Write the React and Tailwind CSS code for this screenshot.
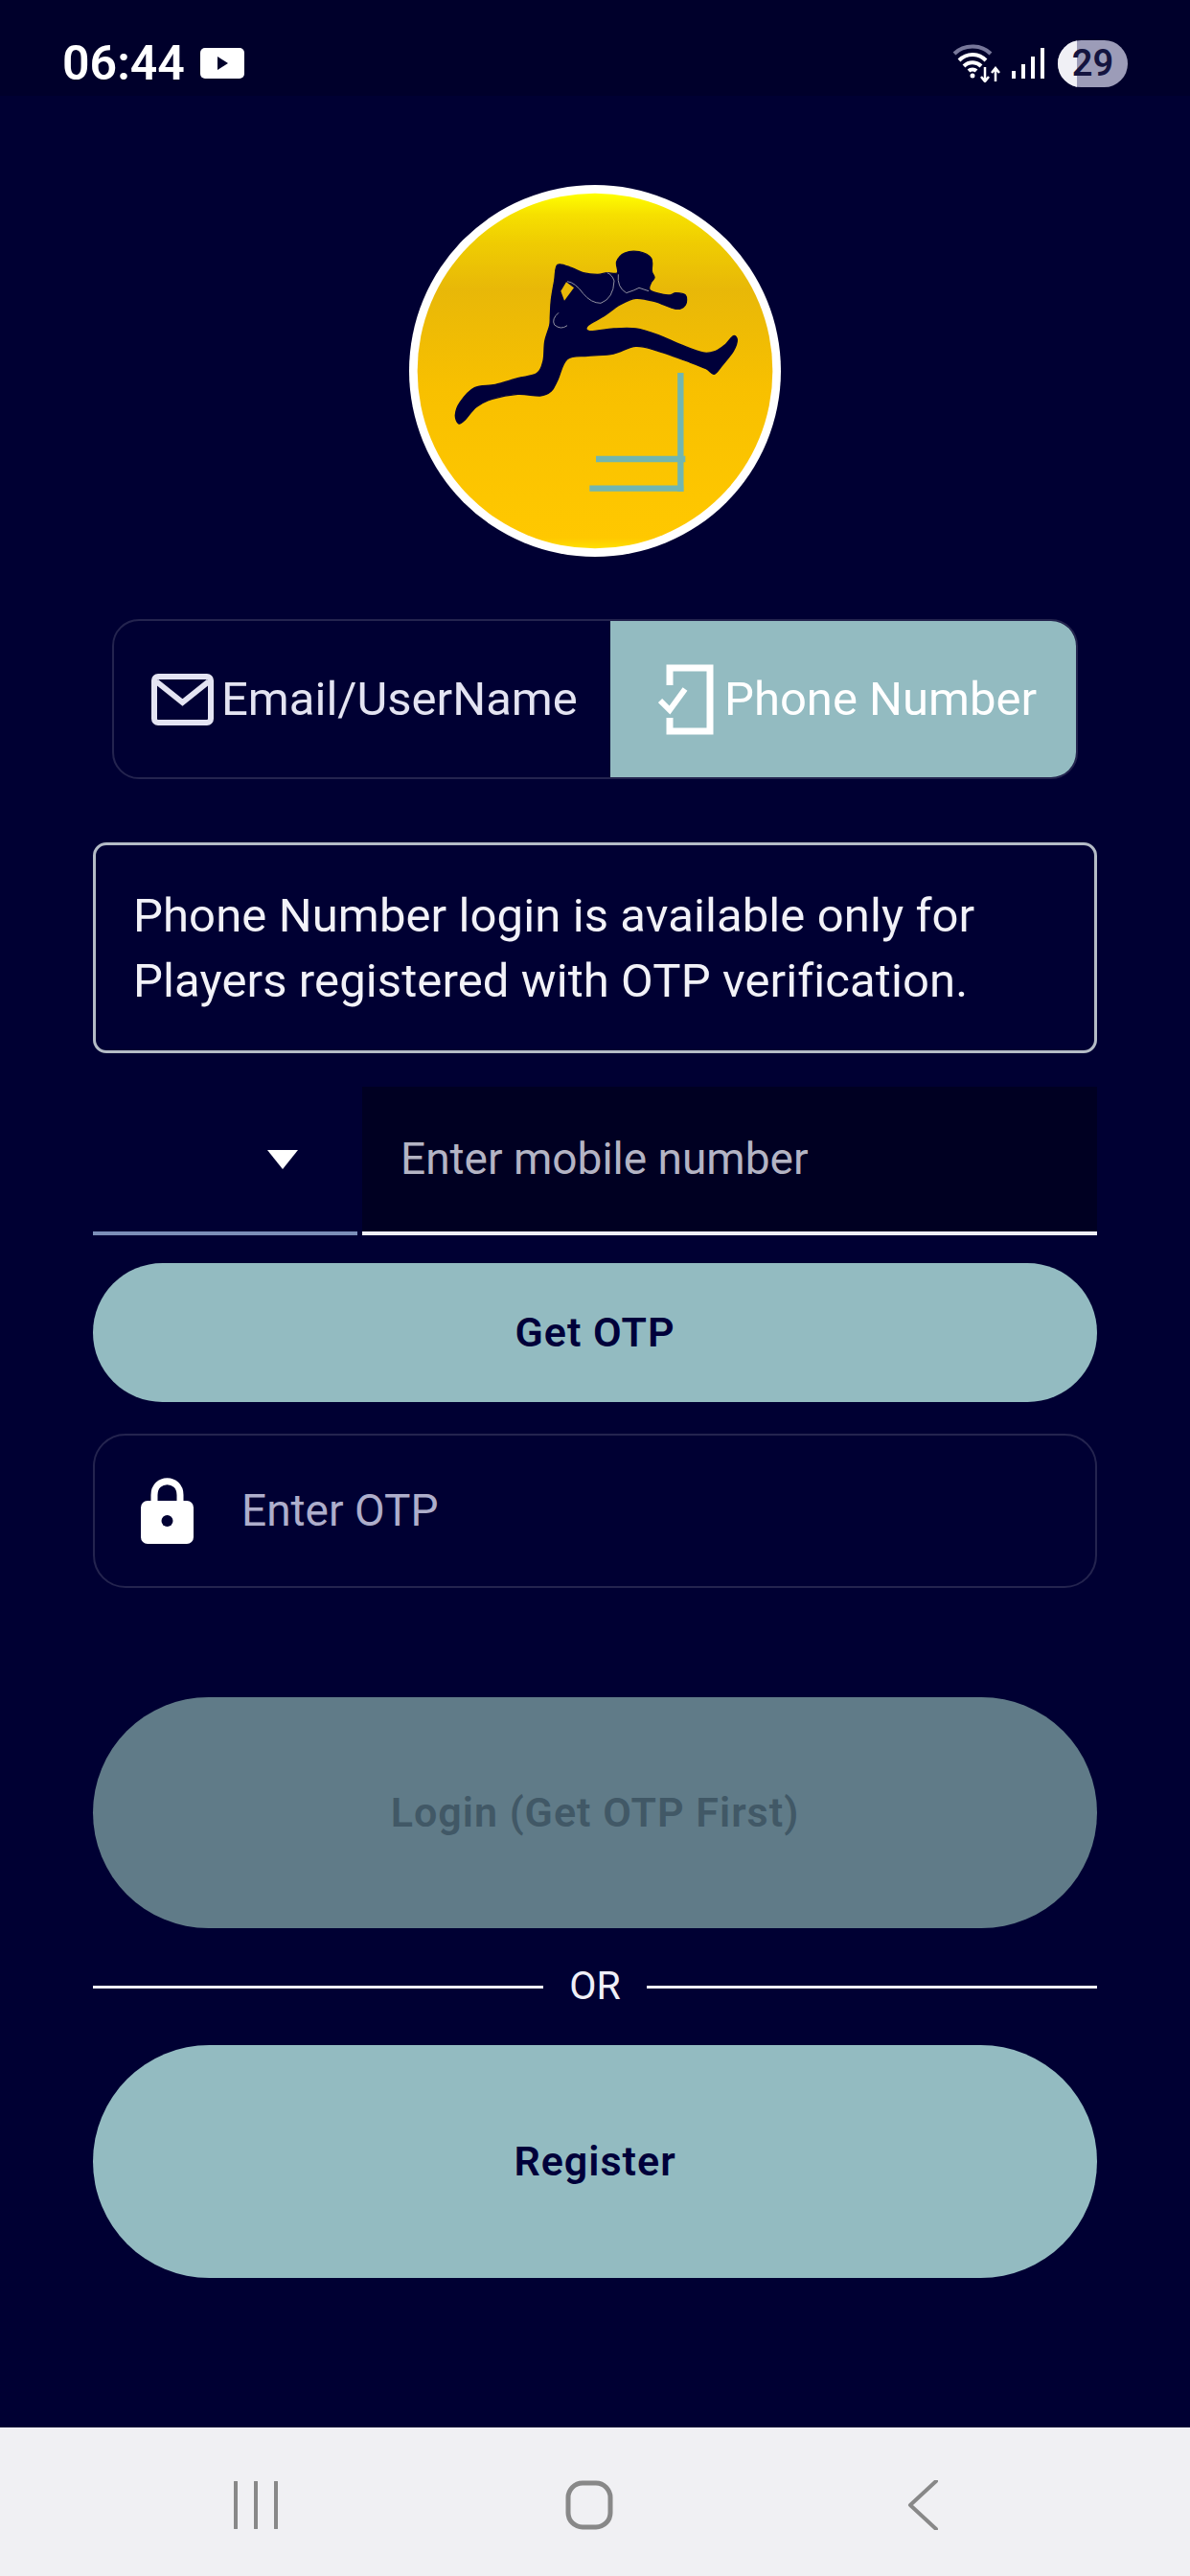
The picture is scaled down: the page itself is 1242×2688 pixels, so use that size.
const RUNNER = [
  [225, 790], [235, 817], [255, 805], [290, 765], [340, 740], [420, 725], [490, 730], [525, 715], [545, 680], [575, 615],
  [640, 605], [720, 598], [790, 575], [860, 590], [960, 625], [1010, 645], [1035, 662], [1060, 635], [1095, 590], [1107, 555],
  [1095, 543], [1070, 570], [1040, 590], [1000, 595], [930, 570], [860, 540], [790, 520], [720, 520], [645, 528], [640, 510],
  [690, 480], [740, 445], [790, 425], [850, 435], [915, 458], [945, 445], [945, 415], [915, 408], [890, 415], [835, 400],
  [838, 375], [848, 360], [840, 340], [838, 300], [800, 279], [755, 283], [730, 310], [732, 345], [700, 345], [670, 350],
  [625, 345], [590, 330], [545, 320], [535, 370], [525, 430], [522, 480], [520, 510], [505, 560], [500, 620], [480, 660],
  [420, 675], [350, 695], [285, 705], [240, 750],
];

// closed catmull-rom through the traced outline
function smoothPath(points) {
  const n = points.length;
  let d = `M${points[0][0]} ${points[0][1]}`;
  for (let i = 0; i < n; i += 1) {
    const p0 = points[(i - 1 + n) % n];
    const p1 = points[i];
    const p2 = points[(i + 1) % n];
    const p3 = points[(i + 2) % n];
    const c1x = p1[0] + (p2[0] - p0[0]) / 6;
    const c1y = p1[1] + (p2[1] - p0[1]) / 6;
    const c2x = p2[0] - (p3[0] - p1[0]) / 6;
    const c2y = p2[1] - (p3[1] - p1[1]) / 6;
    d += ` C${c1x} ${c1y} ${c2x} ${c2y} ${p2[0]} ${p2[1]}`;
  }
  return `${d} Z`;
}

function Logo() {
  return (
    <svg width="388" height="388" viewBox="80 70 1164 1164" className="block">
      <defs>
        <linearGradient id="coin" x1="0" y1="0" x2="0" y2="1">
          <stop offset="0" stopColor="#ffff00" />
          <stop offset="0.06" stopColor="#f6e000" />
          <stop offset="0.14" stopColor="#efcc02" />
          <stop offset="0.27" stopColor="#e8b808" />
          <stop offset="0.55" stopColor="#f8c000" />
          <stop offset="0.97" stopColor="#ffc800" />
          <stop offset="1" stopColor="#ffe000" />
        </linearGradient>
      </defs>
      <circle cx="662" cy="652" r="582" fill="#ffffff" />
      <circle cx="662" cy="652" r="556" fill="url(#coin)" />
      <path d={smoothPath(RUNNER)} fill="#00003a" stroke="#00003a" strokeWidth="4" strokeLinejoin="round" />
      <path d="M575 372 Q600 375 625 410 Q650 440 680 440 Q720 425 722 370 Q715 350 700 345 M735 350 Q730 390 760 408 Q785 400 800 392 L830 402 M548 470 Q525 490 535 508 Q555 525 575 510" fill="none" stroke="#8f8f9f" strokeWidth="3" />
      <path d="M572 374 L596 392 L566 432 L555 402 Z" fill="#e8b808" />
      <path d="M930 658 V1030 M665 928 H945 M645 1020 H940" stroke="#72b6b0" strokeWidth="19" fill="none" />
    </svg>
  );
}

function StatusBar() {
  return (
    <div className="flex h-[100px] items-center bg-[#00002b] pl-[65px] pr-[65px] pt-[32px]">
      <span className="text-[50px] font-semibold leading-none text-white">06:44</span>
      <svg width="46" height="32" viewBox="0 0 46 32" className="ml-[16px]">
        <rect width="46" height="32" rx="5" fill="#ffffff" />
        <path d="M18 9 L29 16 L18 23 Z" fill="#00002b" />
      </svg>
      <div className="ml-auto flex items-center">
        <svg width="54" height="40" viewBox="0 0 54 40">
          <path d="M2 10 C12 0 30 0 40 10" stroke="#77779a" strokeWidth="4" fill="none" />
          <path d="M7 17 C15 9 27 9 35 17 M12 23 C17 18 25 18 30 23 M17 28 C19 26 23 26 25 28" stroke="#ffffff" strokeWidth="4" fill="none" />
          <circle cx="21" cy="33" r="2.5" fill="#ffffff" />
          <path d="M34 24 V38 M30 34 L34 39 L38 34 M45 39 V26 M41 30 L45 25 L49 30" stroke="#ffffff" strokeWidth="2.5" fill="none" />
        </svg>
        <svg width="34" height="32" viewBox="0 0 34 32" className="ml-[8px]">
          <rect x="0" y="24" width="4" height="8" fill="#ffffff" />
          <rect x="10" y="17" width="4" height="15" fill="#ffffff" />
          <rect x="20" y="9" width="4" height="23" fill="#ffffff" />
          <rect x="30" y="0" width="4" height="32" fill="#ffffff" />
        </svg>
        <div className="relative ml-[14px] flex h-[49px] w-[73px] items-center justify-center overflow-hidden rounded-full bg-[#9c9cb8]">
          <div className="absolute inset-y-0 left-0 w-[20px] bg-[#f0f0f5]" />
          <span className="relative text-[38px] font-semibold leading-none text-[#14143f]">29</span>
        </div>
      </div>
    </div>
  );
}

function LoginTabs() {
  return (
    <div className="mx-[20px] mt-[65px] flex h-[167px] overflow-hidden rounded-[28px] border-2 border-[#24244f]">
      <div className="flex w-[518px] items-center pl-[39px]">
        <svg width="65" height="54" viewBox="0 0 65 54" className="shrink-0">
          <rect x="3" y="3" width="59" height="48" rx="4" fill="none" stroke="#e4e4f2" strokeWidth="6" />
          <path d="M5 8 L32.5 30 L60 8" fill="none" stroke="#e4e4f2" strokeWidth="6" />
        </svg>
        <span className="ml-[8px] text-[49px] leading-none text-[#e4e4f2]">Email/UserName</span>
      </div>
      <div className="flex flex-1 items-center bg-[#93bbc1] pl-[50px]">
        <svg width="58" height="74" viewBox="0 0 58 74" className="shrink-0">
          <path d="M12 22 V4 H54 V70 H12 V56" fill="none" stroke="#ffffff" strokeWidth="7" />
          <path d="M2 38 L12 48 L28 26" fill="none" stroke="#ffffff" strokeWidth="6" />
        </svg>
        <span className="ml-[11px] text-[49px] leading-none text-white">Phone Number</span>
      </div>
    </div>
  );
}

function PillButton({ label, height, mt, bg, color }) {
  return (
    <button
      type="button"
      className={`flex w-full items-center justify-center rounded-full text-[43px] font-semibold tracking-[1px] ${height} ${mt} ${bg} ${color}`}
    >
      {label}
    </button>
  );
}

export default function App() {
  return (
    <div className="flex h-[2688px] flex-col bg-[#000033] font-['Roboto',sans-serif]">
      <StatusBar />

      <main className="flex-1 px-[97px]">
        <div className="mt-[93px] flex justify-center">
          <Logo />
        </div>

        <LoginTabs />

        {/* info box */}
        <div className="mt-[66px] flex h-[220px] flex-col justify-center rounded-[14px] border-[3px] border-[#b4bcc6] pl-[39px] pt-[2px] text-[49px] leading-[68px] tracking-[0.1px] text-[#f2f2f8]">
          <p>Phone Number login is available only for</p>
          <p>Players registered with OTP verification.</p>
        </div>

        {/* mobile number */}
        <div className="mt-[35px] flex h-[155px] gap-[5px]">
          <div className="flex w-[276px] items-center justify-end border-b-[4px] border-[#7c8fb8] pr-[62px]">
            <svg width="32" height="20" viewBox="0 0 32 20">
              <path d="M0 0 H32 L16 20 Z" fill="#ffffff" />
            </svg>
          </div>
          <div className="flex flex-1 items-center border-b-[4px] border-[#f0f0f8] bg-[#000022] pl-[40px]">
            <span className="text-[46px] text-[#b4b4c4]">Enter mobile number</span>
          </div>
        </div>

        <PillButton label="Get OTP" height="h-[145px]" mt="mt-[29px]" bg="bg-[#93bbc1]" color="text-[#00003a]" />

        {/* otp */}
        <div className="mt-[33px] flex h-[161px] items-center rounded-[34px] border-2 border-[#24244f] pl-[48px]">
          <svg width="55" height="69" viewBox="0 0 55 69" className="shrink-0">
            <path d="M14 28 V18 C14 -1 41 -1 41 18 V28" fill="none" stroke="#ffffff" strokeWidth="7" />
            <rect y="24" width="55" height="45" rx="7" fill="#ffffff" />
            <circle cx="27.5" cy="45" r="6" fill="#000033" />
          </svg>
          <span className="ml-[50px] text-[46px] text-[#aeaecb]">Enter OTP</span>
        </div>

        <PillButton label="Login (Get OTP First)" height="h-[241px]" mt="mt-[114px]" bg="bg-[#607b88]" color="text-[#415866]" />

        {/* or */}
        <div className="mt-[35px] flex h-[52px] items-center">
          <div className="h-[3px] flex-1 bg-[#f0f0f8]" />
          <span className="px-[27px] text-[41px] text-[#f0f0f8]">OR</span>
          <div className="h-[3px] flex-1 bg-[#f0f0f8]" />
        </div>

        <PillButton label="Register" height="h-[243px]" mt="mt-[35px]" bg="bg-[#93bbc1]" color="text-[#00003a]" />
      </main>

      {/* nav bar */}
      <div className="flex h-[155px] items-center bg-[#f0f0f3] pt-[6px]">
        <div className="flex w-full items-center justify-between pl-[244px] pr-[263px]">
          <svg width="46" height="50" viewBox="0 0 46 50">
            <path d="M2 1 V49 M23 1 V49 M44 1 V49" stroke="#888888" strokeWidth="4" strokeLinecap="round" />
          </svg>
          <svg width="50" height="52" viewBox="0 0 50 52" className="mr-[8px]">
            <rect x="3" y="3" width="44" height="46" rx="15" fill="none" stroke="#888888" strokeWidth="5" />
          </svg>
          <svg width="32" height="52" viewBox="0 0 32 52">
            <path d="M30 1 L3 26 L30 51" fill="none" stroke="#888888" strokeWidth="4" strokeLinecap="round" strokeLinejoin="round" />
          </svg>
        </div>
      </div>
    </div>
  );
}
